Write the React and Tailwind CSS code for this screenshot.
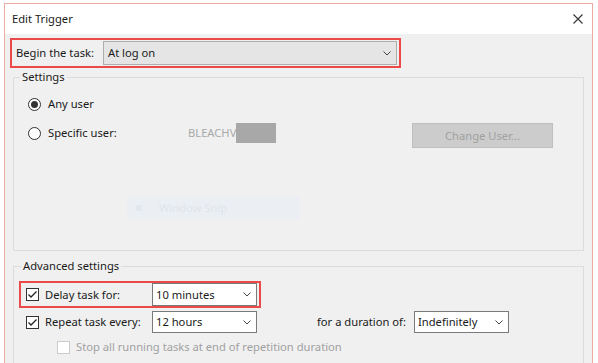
import React from 'react'

const Chevron = () => (
  <svg width="8" height="5" viewBox="0 0 8 5" className="shrink-0">
    <path d="M0.5 0.5 L4 4 L7.5 0.5" fill="none" stroke="#444444" strokeWidth="1" />
  </svg>
)

const CheckBox = ({ checked, disabled }) => (
  <span
    className={`w-[13px] h-[13px] border shrink-0 flex items-center justify-center bg-white ${
      disabled ? 'border-[#cccccc]' : 'border-[#333333]'
    }`}
  >
    {checked && (
      <svg width="11" height="11" viewBox="0 0 11 11">
        <path d="M1.5 5.5 L4 8 L9.5 2.5" fill="none" stroke="#222222" strokeWidth="1.3" />
      </svg>
    )}
  </span>
)

const Radio = ({ checked }) => (
  <span className="w-[13px] h-[13px] rounded-full border border-[#333333] bg-white flex items-center justify-center shrink-0">
    {checked && <span className="w-[7px] h-[7px] rounded-full bg-[#333333]" />}
  </span>
)

const Select = ({ value, className }) => (
  <div className={`flex items-center justify-between border border-[#7a7a7a] bg-white pl-[3px] pr-[5px] ${className}`}>
    <span>{value}</span>
    <Chevron />
  </div>
)

export default function App() {
  return (
    <div className="w-[598px] h-[363px] bg-white pt-[3px] pl-[4px] overflow-hidden font-['Noto_Sans',sans-serif] text-[11.2px] leading-[16px] text-[#1a1a1a]">
      <div className="w-[589px] h-[360px] border-t border-x border-[#f0aaa4] flex flex-col">
        {/* Title bar */}
        <div className="h-[30px] shrink-0 bg-white flex items-center justify-between pl-[7px] pr-[9px]">
          <span>Edit Trigger</span>
          <svg width="10" height="10" viewBox="0 0 10 10">
            <path d="M0.5 0.5 L9.5 9.5 M9.5 0.5 L0.5 9.5" stroke="#333333" strokeWidth="1.1" />
          </svg>
        </div>

        <div className="flex-1 bg-[#f0f0f0] flex flex-col overflow-hidden">
          {/* Begin the task */}
          <div className="ml-[5px] mt-[4px] w-[391px] h-[30px] shrink-0 border-2 border-[#ec4a4a] flex items-center pl-[4px]">
            <span className="w-[87px] shrink-0">Begin the task:</span>
            <div className="w-[294px] h-[24px] flex items-center justify-between bg-[#e5e5e5] border border-[#adadad] pl-[4px] pr-[5px]">
              <span>At log on</span>
              <Chevron />
            </div>
          </div>

          {/* Settings */}
          <fieldset className="ml-[8px] mt-[1px] w-[571px] h-[182px] shrink-0 border border-[#dcdcdc]">
            <legend className="ml-[6px] px-[2px]">Settings</legend>
            <div className="pl-[14px] pt-[9px]">
              <div className="h-[20px] flex items-center gap-[7px]">
                <Radio checked />
                <span>Any user</span>
              </div>
              <div className="mt-[9px] flex items-start">
                <div className="w-[160px] h-[20px] flex items-center gap-[7px] shrink-0">
                  <Radio />
                  <span>Specific user:</span>
                </div>
                <span className="w-[48px] shrink-0 h-[20px] flex items-center whitespace-nowrap text-[#a8a8a8]">BLEACHV</span>
                <span className="relative w-[40px] h-[20px] bg-[#a8a8a8] shrink-0" />
                <div className="ml-[136px] w-[141px] h-[25px] flex items-center justify-center bg-[#cccccc] border border-[#bfbfbf] text-[#a0a0a0]">
                  Change User...
                </div>
              </div>
              <div className="mt-[49px] ml-[99px] w-[173px] h-[22px] flex items-center bg-[#ebeff3] pl-[9px] gap-[17px] text-[#dfe4ea]">
                <span className="w-[6px] h-[6px] bg-[#e3e8ee]" />
                <span>Window Snip</span>
              </div>
            </div>
          </fieldset>

          {/* Advanced settings */}
          <fieldset className="ml-[8px] mt-[7px] w-[571px] h-[130px] shrink-0 border border-[#dcdcdc]">
            <legend className="ml-[7px] px-[2px]">Advanced settings</legend>
            <div className="pl-[5px] pt-[7px]">
              <div className="w-[242px] h-[27px] border-2 border-[#ec4a4a] flex items-center pl-[5px] pr-[2px]">
                <div className="w-[126px] flex items-center gap-[6px] shrink-0">
                  <CheckBox checked />
                  <span>Delay task for:</span>
                </div>
                <Select value="10 minutes" className="w-[105px] h-[23px]" />
              </div>
              <div className="mt-[3px] pl-[7px] h-[22px] flex items-center">
                <div className="w-[126px] flex items-center gap-[6px] shrink-0">
                  <CheckBox checked />
                  <span>Repeat task every:</span>
                </div>
                <Select value="12 hours" className="w-[105px] h-[22px]" />
                <span className="ml-[60px] w-[97px] shrink-0">for a duration of:</span>
                <Select value="Indefinitely" className="w-[95px] h-[22px]" />
              </div>
              <div className="mt-[4px] pl-[38px] h-[20px] flex items-center gap-[6px] text-[#a0a0a0]">
                <CheckBox disabled />
                <span>Stop all running tasks at end of repetition duration</span>
              </div>
            </div>
          </fieldset>
        </div>
      </div>
    </div>
  )
}
